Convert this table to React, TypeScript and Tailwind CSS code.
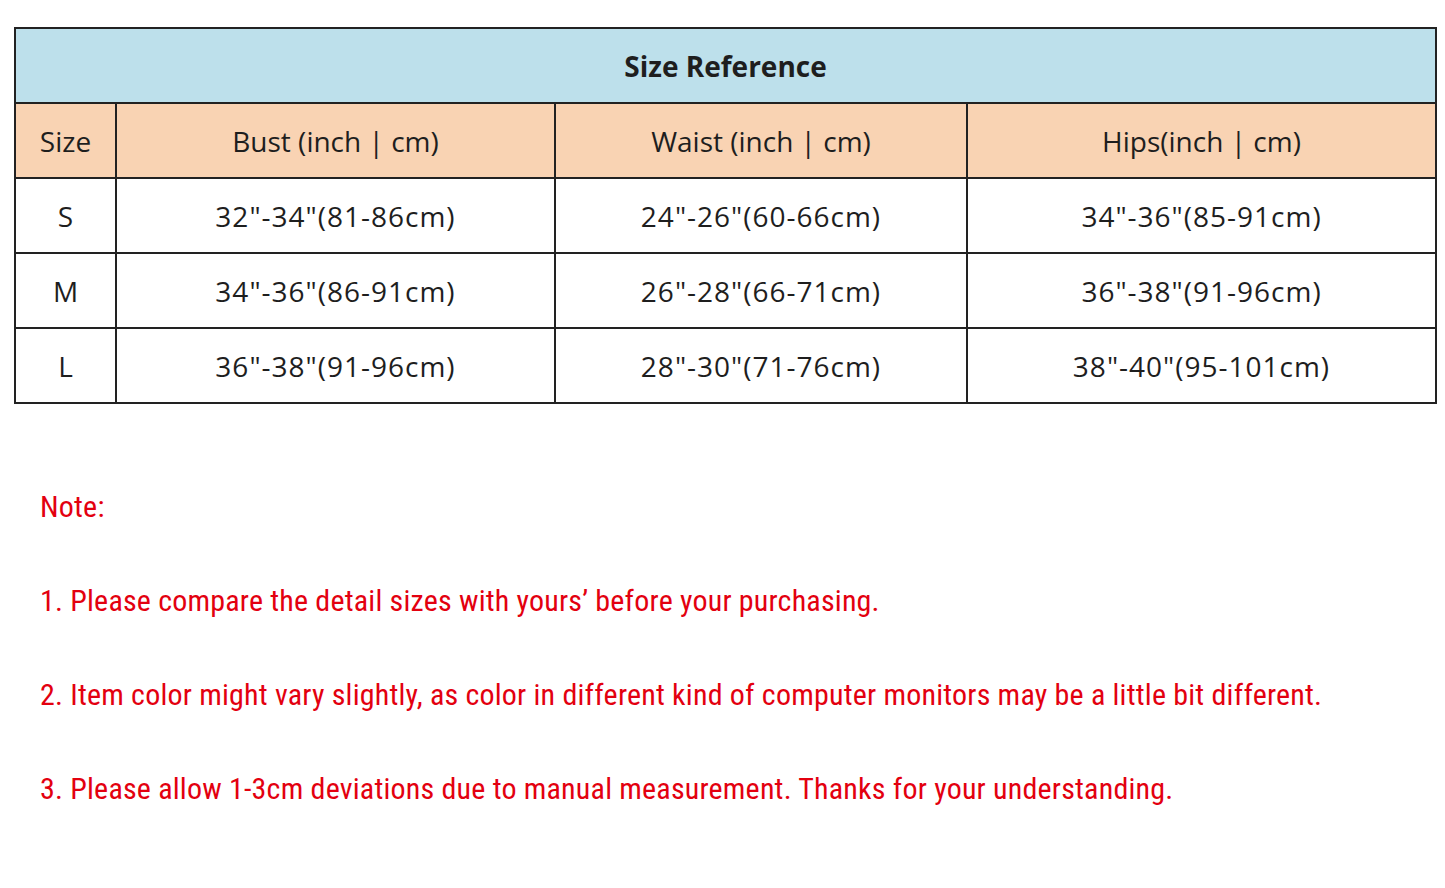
const rows = [
  ['S', '32"-34"(81-86cm)', '24"-26"(60-66cm)', '34"-36"(85-91cm)'],
  ['M', '34"-36"(86-91cm)', '26"-28"(66-71cm)', '36"-38"(91-96cm)'],
  ['L', '36"-38"(91-96cm)', '28"-30"(71-76cm)', '38"-40"(95-101cm)'],
];

const notes = [
  'Note:',
  "1. Please compare the detail sizes with yours\u2019 before your purchasing.",
  '2. Item color might vary slightly, as color in different kind of computer monitors may be a little bit different.',
  '3. Please allow 1-3cm deviations due to manual measurement. Thanks for your understanding.',
];

export default function App() {
  return (
    <div className="w-[1445px] h-[888px] bg-white pt-[27px] pl-[14px] font-['Open_Sans',sans-serif] text-[#1e1e1e]">
      <table className="w-[1421px] border-collapse table-fixed text-[28px]">
        <colgroup>
          <col className="w-[101px]" />
          <col className="w-[439px]" />
          <col className="w-[412px]" />
          <col className="w-[469px]" />
        </colgroup>
        <thead>
          <tr className="h-[75px] bg-[#bde0eb]">
            <th colSpan={4} className="border-2 border-[#222] font-bold text-[28px]">
              Size Reference
            </th>
          </tr>
          <tr className="h-[75px] bg-[#f9d3b3]">
            <th className="border-2 border-[#222] font-normal">Size</th>
            <th className="border-2 border-[#222] font-normal">Bust (inch | cm)</th>
            <th className="border-2 border-[#222] font-normal">Waist (inch | cm)</th>
            <th className="border-2 border-[#222] font-normal">Hips(inch | cm)</th>
          </tr>
        </thead>
        <tbody>
          {rows.map((r) => (
            <tr key={r[0]} className="h-[75px]">
              {r.map((c, i) => (
                <td key={i} className={`border-2 border-[#222] text-center ${i > 0 ? 'tracking-[1px]' : ''}`}>
                  {c}
                </td>
              ))}
            </tr>
          ))}
        </tbody>
      </table>
      <div className="mt-[84px] pl-[26px] flex flex-col gap-[57px] text-[#e3000f] text-[30px] leading-[37px] font-['Liberation_Sans_Narrow','Roboto_Condensed',sans-serif] tracking-[0.2px]">
        {notes.map((n) => (
          <p key={n}>{n}</p>
        ))}
      </div>
    </div>
  );
}
